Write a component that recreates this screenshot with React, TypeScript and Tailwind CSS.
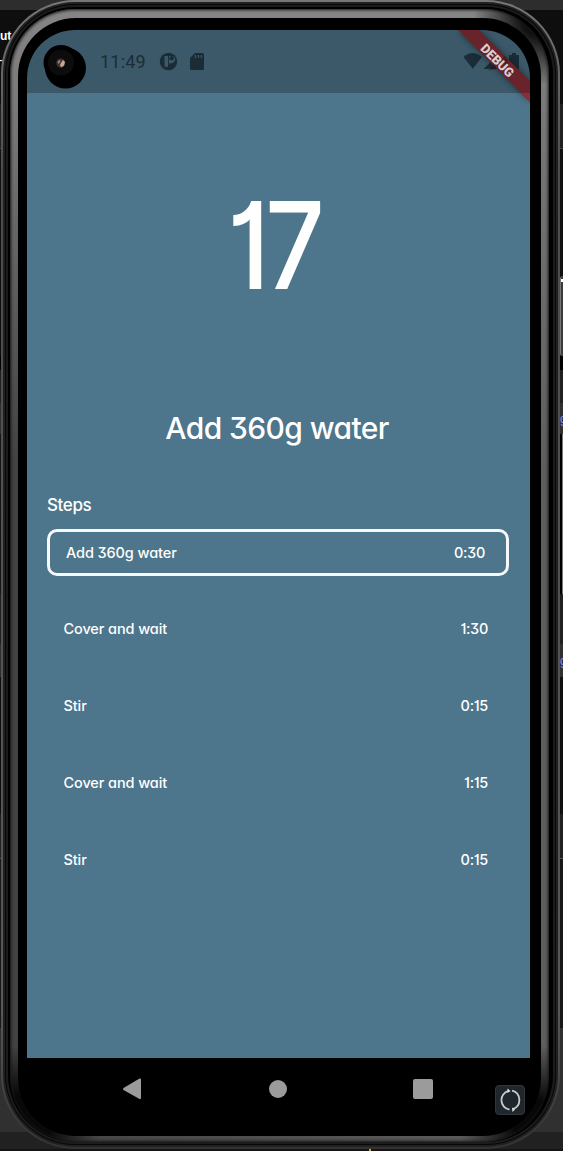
const steps = [
  { name: 'Add 360g water', time: '0:30', active: true },
  { name: 'Cover and wait', time: '1:30', active: false },
  { name: 'Stir', time: '0:15', active: false },
  { name: 'Cover and wait', time: '1:15', active: false },
  { name: 'Stir', time: '0:15', active: false },
];

function Desktop() {
  return (
    <div className="col-start-1 row-start-1 flex h-[1151px] flex-col overflow-hidden bg-[#0e0e0e] font-['Liberation_Sans']">
      <div className="h-[10px] shrink-0 bg-[#2d2d2d]" />
      <div className="flex h-[94px] shrink-0 flex-col bg-[#0e0e0e] pt-[18px] text-[12px] leading-4 text-white">
        <span className="font-bold">ut</span>
        <span className="mt-[8px] ml-[-1px]">-</span>
      </div>
      <div className="h-[45px] shrink-0 border-b border-[#444] bg-[#202020]" />
      <div className="h-[127px] shrink-0 bg-[#101010]" />
      <div className="flex h-[80px] shrink-0 justify-end">
        <div className="flex w-[3px] flex-col rounded-l-sm border-l border-[#777] bg-[#3a3a3a] pt-[3px]">
          <div className="h-[3px] bg-white" />
        </div>
      </div>
      <div className="h-[14px] shrink-0 bg-black" />
      <div className="h-[33px] shrink-0 bg-[#202020]" />
      <div className="flex h-[31px] shrink-0 items-center justify-end bg-[#303030] text-[12px] text-[#8b8ce8]">
        <span className="w-[3px] overflow-hidden">g</span>
      </div>
      <div className="flex h-[160px] shrink-0 justify-end bg-[#151515]">
        <div className="w-[3px] border-r border-[#777] bg-black" />
      </div>
      <div className="h-[50px] shrink-0 bg-[#202020]" />
      <div className="flex h-[33px] shrink-0 items-center justify-end bg-[#303030] text-[12px] text-[#8b8ce8]">
        <span className="w-[3px] overflow-hidden">g</span>
      </div>
      <div className="h-[137px] shrink-0 bg-[#0e0e0e]" />
      <div className="h-[45px] shrink-0 border-b border-[#555] bg-[#202020]" />
      <div className="h-[169px] shrink-0 bg-[#171717]" />
      <div className="h-[104px] shrink-0 bg-[#303030]" />
      <div className="h-[17px] shrink-0 bg-[#212121]" />
      <div className="h-[2px] shrink-0 bg-[#181314] pl-[369px]">
        <div className="h-full w-[2px] bg-[#c7a464]" />
      </div>
    </div>
  );
}

function Camera() {
  return (
    <svg className="ml-[16px] mt-[14px] h-[46px] w-[44px] shrink-0" viewBox="0 0 44 46">
      <circle cx="22.500" cy="24" r="20.500" />
      <circle cx="18" cy="18.500" r="17.500" />
      <path d="M25 2.500 37 9.500 35 24 4 30 1 20Z" />
      <circle cx="18" cy="18.500" r="13" fill="#0c0c0c" />
      <circle cx="17.700" cy="19" r="4.500" fill="#3e332d" />
      <path d="m17 20.500 3-4.500 2 2-1 3.500-3 2Z" fill="#c9a592" />
      <path d="m14.500 17.500 2-1.500 1 1.500-2 2.500Z" fill="#94877f" />
    </svg>
  );
}

function StatusBar() {
  return (
    <div className="flex h-[63px] bg-[#3b5969] text-[#1a2d37]">
      <Camera />
      <span className="ml-[13px] mt-[19px] w-[58px] font-['Roboto'] text-[18px] leading-[26px] tracking-[0.2px]">11:49</span>
      <svg className="mt-[22px] h-[20px] w-[20px]" viewBox="0 0 20 20">
        <circle cx="10.500" cy="9.500" r="8.700" fill="currentColor" />
        <path d="M6.500 4H10v10.300q-1.500 2-3.500-.300Z" fill="#3b5969" />
        <path d="M11 4h3q3.500.5 3 4-1 3.500-6 3.500Z" fill="#3b5969" />
        <circle cx="13.700" cy="6.200" r="2.200" fill="currentColor" />
      </svg>
      <svg className="ml-[12px] mt-[23px] h-[17px] w-[14px]" viewBox="0 0 14 17">
        <path d="M5 0h7.500Q14 0 14 1.500v14q0 1.500-1.500 1.500h-11Q0 17 0 15.500V5Z" fill="currentColor" />
        <path d="M5.500 2v3M8.500 2v3M11.300 2v3" stroke="#3b5969" strokeWidth="1.200" />
      </svg>
      <svg className="ml-auto mr-[10px] mt-[22px] h-[19px] w-[57px]" viewBox="0 0 57 19">
        <path d="M0.500 5Q9.500-3 19 5L9.800 16.800Z" fill="currentColor" />
        <path d="M20.500 17 37 1v16ZM46 3h3V1h4v2h3v14H46Z" fill="currentColor" />
      </svg>
    </div>
  );
}

function DebugBanner() {
  return (
    <svg className="absolute right-0 top-0 h-[82px] w-[82px]" viewBox="0 0 82 82">
      <defs>
        <filter id="bannerShadow" x="-30%" y="-30%" width="160%" height="160%">
          <feGaussianBlur stdDeviation="3" />
        </filter>
      </defs>
      <path d="M10 0H31L82 51V72Z" opacity=".45" filter="url(#bannerShadow)" />
      <path d="M10 0H31L82 51V72Z" fill="#68232b" />
      <path d="M73 63h9v9Z" fill="#8b2e3b" />
      <path d="m40 41 8-8v6ZM52 31l5-5 3 3v9Z" fill="#1a1619" opacity=".35" />
      <g transform="translate(48 32) rotate(45)">
        <text x="0" y="2.500" textAnchor="middle" fill="#d8cfd1" fontFamily="Roboto" fontWeight="900" fontSize="12.800">DEBUG</text>
      </g>
    </svg>
  );
}

function Timer() {
  return (
    <main className="flex h-[965px] flex-col bg-[#4d758b] px-5 font-['Inter'] text-white [font-feature-settings:'cv11','cv09','cv01']">
      <div className="mt-[77px] h-[150px] scale-x-[.86] pr-[11px] text-center text-[121px] font-medium leading-[150px] tracking-[-5px]">17</div>
      <h1 className="mt-[89px] pr-[3px] text-center text-[30px] font-medium leading-[38px] tracking-[-0.6px]">Add 360g water</h1>
      <h2 className="mt-[46px] text-[17px] font-medium leading-6 tracking-[-0.4px]">Steps</h2>
      <div className="mt-[12px] mr-px flex flex-col gap-[31px]">
        {steps.map((step, i) => (
          <div
            key={i}
            className={
              step.active
                ? 'flex h-[47px] items-center justify-between rounded-[10px] border-3 border-white/95 pl-[16px] pr-[21px] -mb-px'
                : 'flex h-[46px] items-center justify-between pl-[16.500px] pr-[21px]'
            }
          >
            <span className="text-[14.500px] font-medium leading-5 tracking-[-0.1px]">{step.name}</span>
            <span className="text-[14.500px] font-medium leading-5 tracking-[-0.3px]">{step.time}</span>
          </div>
        ))}
      </div>
    </main>
  );
}

function NavBar() {
  return (
    <nav className="flex h-[74px]">
      <svg className="ml-[95px] mt-[19px] h-[24px] w-[20px] shrink-0" viewBox="0 0 20 24">
        <path d="M17.500 1.500 1.500 11Q.5 12 1.500 13l16 9q1.500.5 1.500-1V2.500q0-1.500-1.500-1Z" fill="#9b9b9b" />
      </svg>
      <div className="ml-[127px] mt-[22px] size-[18px] shrink-0 rounded-full bg-[#9b9b9b]" />
      <div className="ml-[126px] mt-[21px] size-[20px] shrink-0 rounded-[2px] bg-[#9b9b9b]" />
      <svg className="ml-[62px] mt-[27px] h-[30px] w-[30px] shrink-0" viewBox="0 0 30 30">
        <rect x=".5" y=".5" width="29" height="29" rx="3.500" fill="#20272c" stroke="#323638" />
        <path d="M13.500 5.800A9.700 9.700 0 0 0 14.500 24.700M17 5.700A9.700 9.700 0 0 1 18 24.200" fill="none" stroke="#c8cbcc" strokeWidth="1.800" />
        <path d="m12.500 3.500 3 2.500-3 2ZM17 22.500l3 2-2.500 2.500Z" fill="#e1e3e3" />
      </svg>
    </nav>
  );
}

export default function App() {
  return (
    <div className="grid h-[1151px] w-[563px] overflow-hidden">
      <Desktop />
      <div className="z-10 col-start-1 row-start-1 ml-px h-[1149px] w-[559px] rounded-[74px] bg-[linear-gradient(to_bottom,#777,#4b4d4b_15%,#555855_88%,#333)] p-[2px]">
        <div className="h-full rounded-[72px] bg-[#202020] p-[2px]">
          <div className="h-full rounded-[70px] bg-[#080808] p-px">
            <div className="h-full rounded-[69px] bg-[#1c1c1c] p-[2px]">
              <div className="h-full rounded-[67px] bg-black pl-[2px] pr-[4px] pt-[2px]">
                <div className="h-full rounded-[65px] bg-[radial-gradient(circle_at_3%_98%,#080808_25px,transparent_75px),radial-gradient(circle_at_97%_98%,#080808_20px,transparent_75px),radial-gradient(circle_at_98%_1%,#111_15px,transparent_65px),linear-gradient(to_bottom,#858585,#777_10%,transparent_40%),linear-gradient(to_right,#424242,#5f5f5f)] pb-[6px] pl-[8px] pr-[8px] pt-[9px] shadow-[inset_0_0_3px_1px_#151515]">
                  <div className="h-full rounded-[58px] bg-black pl-[9px] pr-[11px] pt-[12px]">
                    <div className="relative w-[503px] overflow-hidden rounded-t-[48px]">
                      <StatusBar />
                      <Timer />
                      <DebugBanner />
                    </div>
                    <NavBar />
                  </div>
                </div>
              </div>
            </div>
          </div>
        </div>
      </div>
    </div>
  );
}
